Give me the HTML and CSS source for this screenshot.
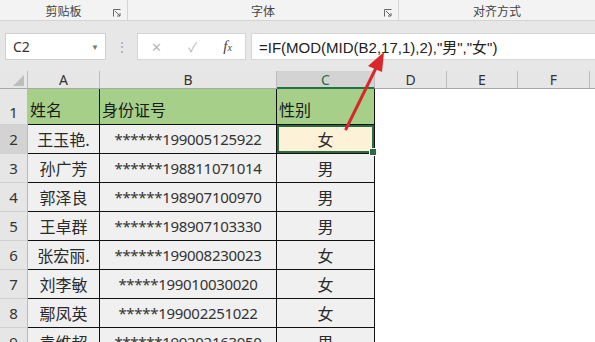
FILE: index.html
```html
<!DOCTYPE html>
<html lang="zh-CN">
<head>
    <meta charset="UTF-8">
    <title>身份证判断性别</title>
    <link rel="stylesheet" href="styles.css">
</head>
<body>
<div class="ribbon">
    <div class="group g-clip">剪贴板<svg class="launcher" width="8" height="8" viewBox="0 0 8 8"><path d="M0.5 7.5V0.5H7.5M2 2L7 7M7 4V7H4" fill="none" stroke="#666" stroke-width="1"/></svg></div>
    <div class="group g-font">字体<svg class="launcher" width="8" height="8" viewBox="0 0 8 8"><path d="M0.5 7.5V0.5H7.5M2 2L7 7M7 4V7H4" fill="none" stroke="#666" stroke-width="1"/></svg></div>
    <div class="group g-align">对齐方式</div>
</div>

<div class="formula-bar">
    <div class="name-box">C2<span class="caret">▼</span></div>
    <div class="grip">⋮</div>
    <div class="fx-box">
        <span class="fx-btn">✕</span>
        <span class="fx-btn">✓</span>
        <span class="fx-btn fx"><i>f</i><small>x</small></span>
    </div>
    <div class="formula">=IF(MOD(MID(B2,17,1),2),"男","女")</div>
</div>

<div class="sheet">
    <div class="corner"><span></span></div>
    <div class="col-head">A</div>
    <div class="col-head">B</div>
    <div class="col-head sel">C</div>
    <div class="col-head">D</div>
    <div class="col-head">E</div>
    <div class="col-head">F</div>
    <div class="col-head last"></div>

    <div class="row-head tall">1</div>
    <div class="cell head">姓名</div>
    <div class="cell head">身份证号</div>
    <div class="cell head">性别</div>
    <div class="blank"></div><div class="blank"></div><div class="blank"></div><div class="blank"></div>

    <div class="row-head sel">2</div>
    <div class="cell name">王玉艳.</div>
    <div class="cell id">******199005125922</div>
    <div class="cell sex active">女<span class="handle"></span></div>
    <div class="blank"></div><div class="blank"></div><div class="blank"></div><div class="blank"></div>

    <div class="row-head">3</div>
    <div class="cell name">孙广芳</div>
    <div class="cell id">******198811071014</div>
    <div class="cell sex">男</div>
    <div class="blank"></div><div class="blank"></div><div class="blank"></div><div class="blank"></div>

    <div class="row-head">4</div>
    <div class="cell name">郭泽良</div>
    <div class="cell id">******198907100970</div>
    <div class="cell sex">男</div>
    <div class="blank"></div><div class="blank"></div><div class="blank"></div><div class="blank"></div>

    <div class="row-head">5</div>
    <div class="cell name">王卓群</div>
    <div class="cell id">******198907103330</div>
    <div class="cell sex">男</div>
    <div class="blank"></div><div class="blank"></div><div class="blank"></div><div class="blank"></div>

    <div class="row-head">6</div>
    <div class="cell name">张宏丽.</div>
    <div class="cell id">******199008230023</div>
    <div class="cell sex">女</div>
    <div class="blank"></div><div class="blank"></div><div class="blank"></div><div class="blank"></div>

    <div class="row-head">7</div>
    <div class="cell name">刘李敏</div>
    <div class="cell id">*****199010030020</div>
    <div class="cell sex">女</div>
    <div class="blank"></div><div class="blank"></div><div class="blank"></div><div class="blank"></div>

    <div class="row-head">8</div>
    <div class="cell name">鄢凤英</div>
    <div class="cell id">*****199002251022</div>
    <div class="cell sex">女</div>
    <div class="blank"></div><div class="blank"></div><div class="blank"></div><div class="blank"></div>

    <div class="row-head">9</div>
    <div class="cell name">袁维超</div>
    <div class="cell id">******199202163050</div>
    <div class="cell sex">男</div>
    <div class="blank"></div><div class="blank"></div><div class="blank"></div><div class="blank"></div>
</div>

<svg class="arrow" width="595" height="342" viewBox="0 0 595 342">
    <line x1="346" y1="129" x2="376" y2="68" stroke="#d8282a" stroke-width="3" stroke-linecap="round"/>
    <polygon points="384,52 368,66 382,72" fill="#d8282a"/>
</svg>
</body>
</html>
```

FILE: styles.css
```css
body {
    margin: 0;
    width: 595px;
    height: 342px;
    overflow: hidden;
    background: #fff;
    font-family: "Noto Sans CJK SC", "Noto Sans", sans-serif;
    position: relative;
}

/* ribbon group labels */
.ribbon {
    display: flex;
    height: 20px;
    background: #f3f3f3;
    border-bottom: 1px solid #d4d4d4;
    font-size: 12px;
    color: #444;
}

.group {
    position: relative;
    display: flex;
    align-items: center;
    justify-content: center;
    border-right: 1px solid #d4d4d4;
}

.g-clip { width: 127px; }
.g-font { width: 270px; }
.g-align { flex: 1; border-right: 0; }

.launcher {
    position: absolute;
    right: 6px;
    bottom: 3px;
}

/* formula bar */
.formula-bar {
    display: flex;
    align-items: center;
    height: 50px;
    background: #e7e7e7;
    padding-left: 5px;
    box-sizing: border-box;
}

.name-box {
    width: 101px;
    height: 27px;
    box-sizing: border-box;
    background: #fff;
    border: 1px solid #cfcfcf;
    display: flex;
    align-items: center;
    justify-content: space-between;
    padding: 0 6px 0 7px;
    font-family: "Noto Sans", sans-serif;
    font-size: 14px;
    color: #333;
}

.caret {
    font-size: 8px;
    color: #777;
}

.grip {
    width: 31px;
    text-align: center;
    color: #aaa;
    font-size: 14px;
}

.fx-box {
    width: 109px;
    height: 27px;
    box-sizing: border-box;
    background: #fff;
    border: 1px solid #d6d6d6;
    display: flex;
    align-items: center;
    justify-content: space-around;
    color: #b8b8b8;
    font-size: 13px;
}

.fx-btn.fx {
    color: #444;
    font-family: "Liberation Serif", serif;
    font-size: 15px;
}

.fx small { font-size: 10px; font-style: italic; }

.formula {
    margin-left: 5px;
    flex: 1;
    height: 27px;
    box-sizing: border-box;
    background: #fff;
    border: 1px solid #d6d6d6;
    border-right: 0;
    display: flex;
    align-items: center;
    padding-left: 7px;
    font-family: "Liberation Sans", "Noto Sans CJK SC", sans-serif;
    font-size: 15px;
    color: #222;
}

/* sheet */
.sheet {
    display: grid;
    grid-template-columns: 28px 72px 177px 98px 72px 71px 72px 5px;
    grid-template-rows: 18px 36px repeat(8, 29px);
    font-size: 16px;
    color: #2a2a2a;
}

.corner {
    background: #e6e6e6;
    border-right: 1px solid #bcbcbc;
    border-bottom: 1px solid #a8a8a8;
    position: relative;
}

.corner span {
    position: absolute;
    right: 3px;
    bottom: 2px;
    border-left: 11px solid transparent;
    border-bottom: 11px solid #bdbdbd;
}

.col-head {
    background: #e6e6e6;
    border-right: 1px solid #bcbcbc;
    border-bottom: 1px solid #a8a8a8;
    display: flex;
    align-items: center;
    justify-content: center;
    font-family: "Noto Sans", sans-serif;
    font-size: 14px;
    color: #333;
}

.col-head.sel {
    background: #d3d3d3;
    border-bottom: 2px solid #217346;
    color: #217346;
}

.col-head.last { border-right: 0; }

.row-head {
    background: #e6e6e6;
    border-right: 1px solid #bcbcbc;
    border-bottom: 1px solid #d0d0d0;
    display: flex;
    align-items: center;
    justify-content: center;
    font-family: "Noto Sans", sans-serif;
    font-size: 15px;
    color: #333;
}

.row-head.tall { align-items: flex-end; padding-bottom: 2px; }
.row-head.sel { background: #d3d3d3; }

.cell {
    background: #f0f0f0;
    border-right: 1px solid #111;
    border-bottom: 1px solid #111;
    display: flex;
    align-items: center;
    justify-content: center;
    white-space: nowrap;
    overflow: hidden;
}

.cell.head {
    background: #a6cf8a;
    justify-content: flex-start;
    padding: 4px 0 0 2px;
    font-size: 16px;
    color: #1a1a1a;
}

.cell.id {
    font-family: "Noto Sans", sans-serif;
    font-size: 15px;
    letter-spacing: -0.3px;
    color: #333;
}

.cell.sex.active {
    background: #fdf1d7;
    box-shadow: inset 0 0 0 2px #2a6b3f;
    overflow: visible;
    position: relative;
}

.handle {
    position: absolute;
    right: -3px;
    bottom: -3px;
    width: 6px;
    height: 6px;
    background: #2a6b3f;
    border: 1px solid #fff;
}

.blank { background: #fff; }

.arrow {
    position: absolute;
    left: 0;
    top: 0;
    pointer-events: none;
}
```
